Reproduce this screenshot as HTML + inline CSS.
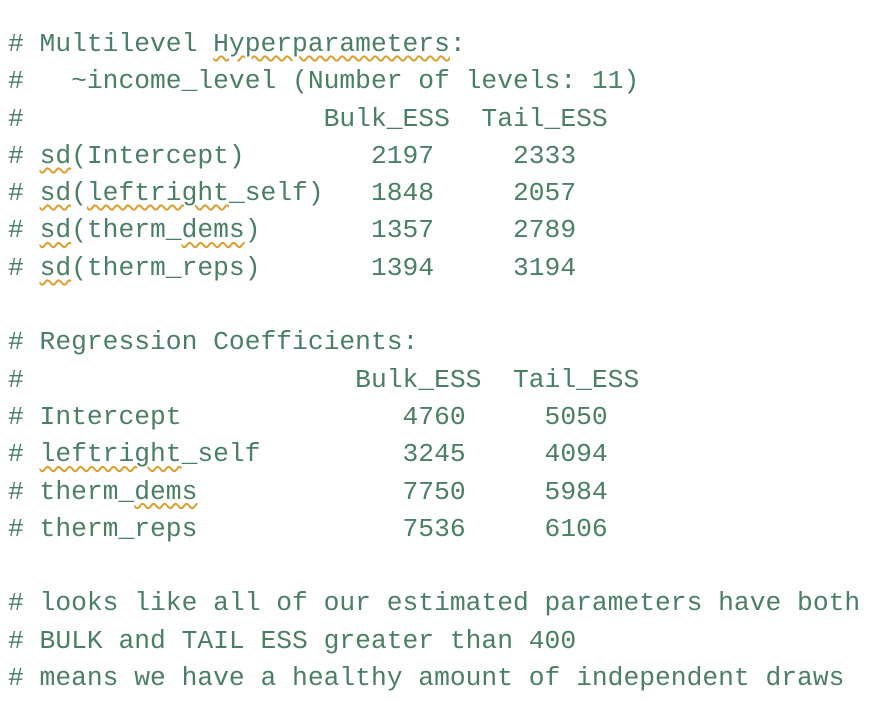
<!DOCTYPE html>
<html><head><meta charset="utf-8"><style>
html,body{margin:0;background:#fff;width:888px;height:710px;overflow:hidden}
pre{margin:0;position:absolute;left:8px;top:26px;font-family:"Liberation Mono",monospace;font-size:26.3px;line-height:37.3px;color:#4a7f66}
u{text-decoration:underline wavy #d9a030;text-decoration-thickness:1.5px;text-underline-offset:4px}
</style></head><body><pre># Multilevel <u>Hyperparameters</u>:
#   ~income_level (Number of levels: 11)
#                   Bulk_ESS  Tail_ESS
# <u>sd</u>(Intercept)        2197     2333
# <u>sd</u>(<u>leftright</u>_self)   1848     2057
# <u>sd</u>(therm_<u>dems</u>)       1357     2789
# <u>sd</u>(therm_reps)       1394     3194

# Regression Coefficients:
#                     Bulk_ESS  Tail_ESS
# Intercept              4760     5050
# <u>leftright</u>_self         3245     4094
# therm_<u>dems</u>             7750     5984
# therm_reps             7536     6106

# looks like all of our estimated parameters have both
# BULK and TAIL ESS greater than 400
# means we have a healthy amount of independent draws</pre></body></html>
